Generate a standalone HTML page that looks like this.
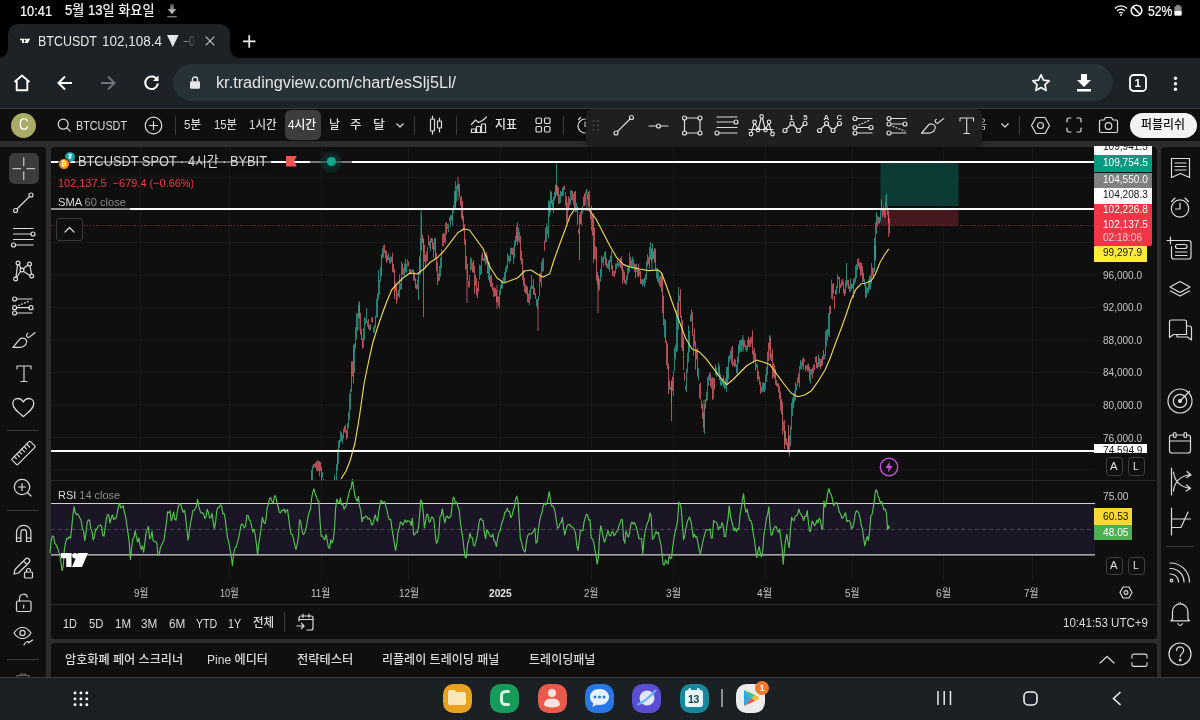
<!DOCTYPE html>
<html lang="ko">
<head>
<meta charset="utf-8">
<title>BTCUSDT 102,108.4</title>
<style>
*{box-sizing:border-box;margin:0;padding:0}
html,body{width:1200px;height:720px;overflow:hidden;background:#000}
body{position:relative;font-family:"Liberation Sans","Noto Sans CJK KR",sans-serif;color:#dbdbdb;-webkit-font-smoothing:antialiased}
.abs{position:absolute}
.t{position:absolute;white-space:nowrap;line-height:1}
svg{position:absolute;overflow:visible}
.ic{fill:none;stroke:#dbdbdb;stroke-width:1.2;stroke-linecap:round;stroke-linejoin:round}
#status{left:0;top:0;width:1200px;height:22px;background:#000}
#tabstrip{left:0;top:22px;width:1200px;height:36px;background:#000}
#tab{left:8px;top:23.500px;width:221.500px;height:34.500px;background:#1c2225;border-radius:10px 10px 0 0}
#toolbar{left:0;top:57.500px;width:1200px;height:50.500px;background:#1c2225}
#url{left:173px;top:64px;width:940px;height:37px;border-radius:19px;background:#273236}
#tvbg{left:0;top:108px;width:1200px;height:569px;background:#2c2c2c;border-top:1px solid #363b3d}
#tvhead{left:0;top:109px;width:1200px;height:32px;background:#0f0f0f}
#ltool{left:0;top:146.500px;width:46.200px;height:530px;background:#0f0f0f;border-radius:0 4px 0 0}
#rtool{left:1160.500px;top:146.500px;width:40px;height:530px;background:#0f0f0f;border-radius:4px 0 0 0}
#chart{left:50.500px;top:146.500px;width:1106px;height:492px;background:#0f0f0f;border-radius:4px}
#bpanel{left:50.500px;top:642.500px;width:1106px;height:34.500px;background:#0f0f0f;border-radius:4px 4px 0 0}
#nav{left:0;top:677px;width:1200px;height:43px;background:#1a2023;border-top:1px solid #353c3f}
#float{left:586px;top:109px;width:395.500px;height:36px;background:#1f1f1f;border-radius:6px;box-shadow:0 2px 4px rgba(0,0,0,.5)}
.sep{position:absolute;width:1px;background:#3a3a3a}
.hsep{position:absolute;height:1px;background:#3a3a3a}
.tv{font-size:13.5px;color:#dbdbdb}
.pl{position:absolute;left:1095px;width:58px;font-size:12px;line-height:1;color:#fff;padding-left:8px;white-space:nowrap}
.ax{position:absolute;left:1103px;font-size:12px;color:#c9c9c9;white-space:nowrap;line-height:1}
.mo{position:absolute;top:586px;font-size:12px;color:#c9c9c9;white-space:nowrap;line-height:1;transform:translateX(-50%)}
.box{position:absolute;width:17px;height:18.500px;border:1px solid #3f3f3f;border-radius:3.500px}
.rg{top:616px;font-size:13.500px;color:#dbdbdb}
.bp{top:653px;font-size:13px;color:#dbdbdb}
.app{top:684px;width:29px;height:29px;border-radius:10.500px}
</style>
</head>
<body>
<div id="root" style="position:absolute;left:0;top:0;width:1200px;height:720px;will-change:transform">
<!-- ===== Android status bar ===== -->
<div id="status" class="abs"></div>
<div class="t" style="transform-origin:0 50%;transform:scaleX(0.9131);left:19.7px;top:4.3px;font-size:14px;color:#fff;-webkit-text-stroke:.2px #f4f4f4">10:41</div>
<div class="t" style="transform-origin:0 50%;transform:scaleX(0.9505);left:64.7px;top:4.1px;font-size:13.8px;color:#fff;-webkit-text-stroke:.2px #f4f4f4">5월 13일 화요일</div>
<svg style="left:167px;top:4px" width="10" height="14" viewBox="0 0 10 14"><defs><linearGradient id="dl" x1="0" y1="0" x2="0" y2="1"><stop offset="0" stop-color="#4a4a4a"/><stop offset="1" stop-color="#e0e0e0"/></linearGradient></defs><path d="M3.300 0h3.400v5H9.500L5 10 .5 5h2.800z" fill="url(#dl)"/><rect x="0.300" y="12" width="9.400" height="1.400" fill="#777"/></svg>
<svg style="left:1114.300px;top:4px" width="14" height="12.500" viewBox="0 0 16 14" preserveAspectRatio="none"><path d="M1 5a10 10 0 0 1 14 0M3.500 7.700a6.500 6.500 0 0 1 9 0M6 10.300a3 3 0 0 1 4 0" fill="none" stroke="#fff" stroke-width="1.500"/><circle cx="8" cy="12.300" r="1" fill="#fff"/></svg>
<svg style="left:1130px;top:4px" width="13" height="13" viewBox="0 0 13 13"><circle cx="6.500" cy="6.500" r="5.300" fill="none" stroke="#fff" stroke-width="1.600"/><path d="M2.800 2.800l7.400 7.400" stroke="#fff" stroke-width="1.600"/></svg>
<div class="t" style="transform-origin:0 50%;transform:scaleX(0.8669);left:1147.5px;top:3.8px;font-size:14px;color:#fff;-webkit-text-stroke:.2px #f4f4f4">52%</div>
<svg style="left:1174px;top:4.500px" width="8" height="11" viewBox="0 0 9 14" preserveAspectRatio="none"><rect x="2.500" y="0" width="4" height="2" fill="#8a8a8a"/><rect x="0.500" y="1.500" width="8" height="12" rx="1.500" fill="#8a8a8a"/><path d="M.5 7.500h8V12a1.500 1.500 0 0 1-1.500 1.500H2A1.500 1.500 0 0 1 .5 12z" fill="#fff"/></svg>

<!-- ===== Browser tab strip ===== -->
<div id="tabstrip" class="abs"></div>
<div id="tab" class="abs"></div>
<svg style="left:0;top:48px" width="8" height="10" viewBox="0 0 8 10"><path d="M0 10h8V0A10 10 0 0 1 0 10z" fill="#1c2225"/></svg>
<svg style="left:229.500px;top:48px" width="8" height="10" viewBox="0 0 8 10"><path d="M8 10H0V0A10 10 0 0 0 8 10z" fill="#1c2225"/></svg>
<svg style="left:20px;top:37.800px" width="11" height="5.700" viewBox="0 0 28 18" preserveAspectRatio="none"><path d="M0 2h10v14H5V7H0zM17 2h9l-6 14h-9z" fill="#fff"/><circle cx="13.500" cy="4.500" r="2.600" fill="#fff"/></svg>
<div class="t" style="transform-origin:0 50%;transform:scaleX(0.8892);left:37.5px;top:33.8px;font-size:14px;color:#e6e6e6">BTCUSDT</div><div class="t" style="transform-origin:0 50%;transform:scaleX(0.9631);left:101.7px;top:33.8px;font-size:14px;color:#e6e6e6">102,108.4</div><div class="t" style="transform-origin:0 50%;transform:scaleX(0.9730);left:166.7px;top:33.25px;font-size:15.5px;color:#e6e6e6;font-family:DejaVu Sans,sans-serif">▼</div><div class="t" style="transform-origin:0 50%;transform:scaleX(0.7327);left:183.3px;top:33.8px;font-size:14px;color:#e6e6e6;-webkit-mask-image:linear-gradient(90deg,rgba(0,0,0,.6),rgba(0,0,0,.15))">−0</div>
<svg style="left:204.500px;top:35.500px" width="10" height="10" viewBox="0 0 10 10"><path d="M.7.700l8.600 8.600M9.300.7L.7 9.300" stroke="#c4c4c4" stroke-width="1.150"/></svg>
<svg style="left:243px;top:35px" width="12.500" height="12.800" viewBox="0 0 13 13"><path d="M6.500 0v13M0 6.500h13" stroke="#f2f2f2" stroke-width="1.800"/></svg>

<!-- ===== Browser toolbar ===== -->
<div id="toolbar" class="abs"></div>
<svg style="left:13px;top:74px" width="18" height="18" viewBox="0 0 18 18"><path d="M1.500 8L9 1.500 16.500 8M3.700 6.500v9.700h10.600V6.500" fill="none" stroke="#fff" stroke-width="1.900" stroke-linejoin="round"/></svg>
<svg style="left:57px;top:75px" width="16" height="16" viewBox="0 0 16 16"><path d="M15 8H2M8 1.500L1.500 8 8 14.500" fill="none" stroke="#fff" stroke-width="2"/></svg>
<svg style="left:100px;top:75px" width="16" height="16" viewBox="0 0 16 16"><path d="M1 8h13M8 1.500L14.500 8 8 14.500" fill="none" stroke="#6b7478" stroke-width="2"/></svg>
<svg style="left:143px;top:74px" width="17" height="17" viewBox="0 0 17 17"><path d="M14.300 6.200A6.300 6.300 0 1 0 14.800 9.500" fill="none" stroke="#fff" stroke-width="2"/><path d="M15.500 1.500v5.500h-5.500z" fill="#fff"/></svg>
<div id="url" class="abs"></div>
<svg style="left:189.500px;top:76px" width="10" height="13" viewBox="0 0 11 14"><rect x="0" y="5.500" width="11" height="8.500" rx="1.200" fill="#e6e6e6"/><path d="M2.700 6V3.800a2.800 2.800 0 0 1 5.600 0V6" fill="none" stroke="#e6e6e6" stroke-width="1.500"/></svg>
<div class="t" style="transform-origin:0 50%;transform:scaleX(1.0150);left:216.4px;top:74.5px;font-size:16px;color:#e3e3e3">kr.tradingview.com/chart/esSlj5Ll/</div>
<svg style="left:1031px;top:73px" width="20" height="19" viewBox="0 0 20 19"><path d="M10 1.800l2.500 5.300 5.700.7-4.200 3.900 1.100 5.700L10 14.600l-5.100 2.800 1.100-5.700L1.800 7.800l5.700-.7z" fill="none" stroke="#fff" stroke-width="1.700" stroke-linejoin="round"/></svg>
<svg style="left:1076px;top:74px" width="16" height="18" viewBox="0 0 16 18"><path d="M5 0h6v6h4l-7 7-7-7h4z" fill="#fff"/><rect x="1" y="15" width="14" height="2.500" fill="#fff"/></svg>
<svg style="left:1129px;top:74px" width="18" height="18" viewBox="0 0 18 18"><rect x="1" y="1" width="16" height="16" rx="3.500" fill="none" stroke="#fff" stroke-width="1.800"/></svg>
<div class="t" style="left:1134.500px;top:77.500px;font-size:11.500px;color:#fff;font-weight:bold">1</div>
<svg style="left:1173px;top:76px" width="5" height="16" viewBox="0 0 5 16"><circle cx="2.500" cy="2.200" r="1.700" fill="#fff"/><circle cx="2.500" cy="7.700" r="1.700" fill="#fff"/><circle cx="2.500" cy="13.200" r="1.700" fill="#fff"/></svg>
<!-- ===== TradingView app ===== -->
<div id="tvbg" class="abs"></div>
<div id="tvhead" class="abs"></div>
<div class="abs" style="left:10.800px;top:112.800px;width:25px;height:25px;border-radius:50%;background:#a9ab66"></div>
<div class="t" style="transform-origin:0 50%;transform:scaleX(0.7918);left:18.7px;top:117px;font-size:16.8px;color:#fff">C</div>
<svg style="left:57px;top:118px" width="14" height="14" viewBox="0 0 14 14"><circle cx="6.200" cy="6.200" r="5" class="ic" stroke-width="1.300"/><path d="M9.900 9.900l3.300 3.300" class="ic" stroke-width="1.300"/></svg>
<div class="t" style="transform-origin:0 50%;transform:scaleX(0.8307);left:76px;top:118.8px;font-size:13px;color:#dbdbdb">BTCUSDT</div>
<svg style="left:144px;top:116px" width="19" height="19" viewBox="0 0 19 19"><circle cx="9.500" cy="9.500" r="8.300" class="ic"/><path d="M9.500 5.500v8M5.500 9.500h8" class="ic"/></svg>
<div class="sep" style="left:175px;top:116px;height:19px"></div>
<div class="t" style="transform-origin:0 50%;transform:scaleX(0.9213);left:184.4px;top:119.25px;font-size:12.5px;color:#dbdbdb;font-weight:500">5분</div>
<div class="t" style="transform-origin:0 50%;transform:scaleX(0.9053);left:214px;top:119.25px;font-size:12.5px;color:#dbdbdb;font-weight:500">15분</div>
<div class="t" style="transform-origin:0 50%;transform:scaleX(0.9214);left:249.4px;top:119.25px;font-size:12.5px;color:#dbdbdb;font-weight:500">1시간</div>
<div class="abs" style="left:285px;top:110px;width:36px;height:30px;border-radius:6px;background:#3d3d3d"></div>
<div class="t" style="transform-origin:0 50%;transform:scaleX(0.9415);left:288.4px;top:119.25px;font-size:12.5px;color:#fff;font-weight:500">4시간</div>
<div class="t" style="transform-origin:0 50%;transform:scaleX(0.9552);left:328.5px;top:119.25px;font-size:12.5px;color:#dbdbdb;font-weight:500">날</div>
<div class="t" style="transform-origin:0 50%;transform:scaleX(0.9986);left:350px;top:119.25px;font-size:12.5px;color:#dbdbdb;font-weight:500">주</div>
<div class="t" style="transform-origin:0 50%;transform:scaleX(1.0421);left:372.5px;top:119.25px;font-size:12.5px;color:#dbdbdb;font-weight:500">달</div>
<svg style="left:396px;top:123px" width="8" height="5" viewBox="0 0 8 5"><path d="M.7.800L4 4 7.300.8" class="ic" stroke-width="1.200"/></svg>
<div class="sep" style="left:414px;top:116px;height:19px"></div>
<svg style="left:429px;top:115px" width="14" height="20" viewBox="0 0 14 20"><path d="M3.500 1v3M3.500 16v3M10.500 3v3M10.500 13v4" class="ic"/><rect x="1.500" y="4" width="4" height="12" rx=".5" class="ic"/><rect x="8.500" y="6" width="4" height="7" rx=".5" class="ic"/></svg>
<div class="sep" style="left:456px;top:116px;height:19px"></div>
<svg style="left:470px;top:116px" width="18" height="18" viewBox="0 0 18 18"><path d="M1.500 8.500l4-4.500 3 2.500 4-2 4-3.500" class="ic" stroke-width="1.300"/><path d="M1.500 16.500v-3.500h4v3.500M6.500 16.500v-6h4v6M11.500 16.500v-8.500h4v8.500M1 16.500h15" class="ic" stroke-width="1.300"/></svg>
<div class="t" style="transform-origin:0 50%;transform:scaleX(0.9559);left:494.5px;top:119.25px;font-size:12.5px;color:#e6e6e6;font-weight:500">지표</div>
<svg style="left:535px;top:117px" width="16" height="16" viewBox="0 0 16 16"><rect x="1" y="1" width="5.500" height="5.500" rx="1.200" class="ic" stroke-width="1.300"/><rect x="9.500" y="1" width="5.500" height="5.500" rx="1.200" class="ic" stroke-width="1.300"/><rect x="1" y="9.500" width="5.500" height="5.500" rx="1.200" class="ic" stroke-width="1.300"/><rect x="9.500" y="9.500" width="5.500" height="5.500" rx="1.200" class="ic" stroke-width="1.300"/></svg>
<div class="sep" style="left:563px;top:116px;height:19px"></div>
<svg style="left:575px;top:116px" width="18" height="18" viewBox="0 0 18 18"><circle cx="10" cy="10" r="7" class="ic" stroke-width="1.300"/><path d="M10 6v4.500h4M3.500 3.500l2-2" class="ic" stroke-width="1.300"/></svg>
<!-- right side of header (partly behind floating toolbar) -->
<div class="t" style="transform-origin:0 50%;transform:scaleX(1.0421);left:975px;top:119.25px;font-size:12.5px;color:#bbb">음</div>
<svg style="left:1000.500px;top:123px" width="8" height="5" viewBox="0 0 8 5"><path d="M.7.800L4 4 7.300.8" class="ic" stroke-width="1.200"/></svg>
<div class="sep" style="left:1019px;top:116px;height:19px"></div>
<svg style="left:1030px;top:115px" width="21" height="21" viewBox="0 0 21 21"><path d="M6 2.500h9l4.500 8-4.500 8H6l-4.500-8z" class="ic" stroke-width="1.400"/><circle cx="10.500" cy="10.500" r="3" class="ic" stroke-width="1.400"/></svg>
<svg style="left:1066px;top:117px" width="16" height="16" viewBox="0 0 16 16"><path d="M1 5V2.500A1.500 1.500 0 0 1 2.500 1H5M11 1h2.500A1.500 1.500 0 0 1 15 2.500V5M15 11v2.500a1.500 1.500 0 0 1-1.500 1.500H11M5 15H2.500A1.500 1.500 0 0 1 1 13.500V11" class="ic" stroke-width="1.400"/></svg>
<svg style="left:1098px;top:116px" width="21" height="18" viewBox="0 0 21 18"><path d="M1.500 5.500a1.500 1.500 0 0 1 1.500-1.500h3l1.500-2.500h6L15 4h3a1.500 1.500 0 0 1 1.500 1.500v9.500a1.500 1.500 0 0 1-1.500 1.500H3a1.500 1.500 0 0 1-1.500-1.500z" class="ic" stroke-width="1.400"/><circle cx="10.500" cy="10" r="3.300" class="ic" stroke-width="1.400"/></svg>
<div class="abs" style="left:1129.500px;top:112.500px;width:67px;height:25.500px;border-radius:13px;background:#f2f2f2"></div>
<div class="t" style="transform-origin:0 50%;transform:scaleX(0.9562);left:1141px;top:119.05px;font-size:12.5px;color:#111;font-weight:500">퍼블리쉬</div>
<!-- ===== left drawing toolbar ===== -->
<div id="ltool" class="abs"></div>
<div class="abs" style="left:8.500px;top:153px;width:30.500px;height:30.500px;border-radius:6px;background:#3c3c3c"></div>
<svg style="left:0;top:147px" width="46" height="530" viewBox="0 147 46 530">
<g class="ic" stroke-width="1.150">
<path d="M23.700 158v7.500M23.700 172v7.500M13 168.700h7.500M27 168.700h7.500" stroke="#bdbdbd" stroke-width="1.300"/>
<path d="M17 209l12.500-12.500"/><circle cx="15.600" cy="210.500" r="2"/><circle cx="31" cy="195" r="2"/>
<path d="M13.500 228.500h19.500M13.500 234h17.500M13.500 239.500h19.500M15.500 245h17.500"/><circle cx="33" cy="234" r="2"/><circle cx="13.500" cy="245" r="2"/>
<path d="M17.500 265l-1.500 12M19 264.500l2 4M23.500 268.500l4.500-3.500M30 266l1.500 8M23.500 271.500l6.500 4M20.500 271.500l-4 6"/><circle cx="18" cy="263" r="1.900"/><circle cx="29.500" cy="264" r="1.900"/><circle cx="22" cy="270" r="1.900"/><circle cx="31.700" cy="276" r="1.900"/><circle cx="15.600" cy="279" r="1.900"/>
<path d="M16.500 299h15.500M16.500 307.700h12.500M16.500 313h15.500"/><path d="M18.500 305.500l11-4.500" stroke-dasharray="1 2.200"/><circle cx="14.600" cy="299" r="2"/><circle cx="14.600" cy="307.700" r="2"/><circle cx="31" cy="307.700" r="2"/><circle cx="14.600" cy="313" r="2"/>
<path d="M12.900 347.300L19.900 339.100C21.400 337.600 24.900 337.600 26.400 340.100C27.900 343.100 24.400 347.300 20.400 347.300ZM27.700 333.400C25.900 334.600 26.200 337.100 28.700 337.600L35 332.700"/>
<path d="M17 369v-3h14v3M24 366v15.500M21 381.500h6" stroke-width="1.100"/>
<path d="M23.300 416.500c-5-4-10.500-8-10.500-13 0-3 2.300-5 5-5 2.300 0 4.200 1.300 5.500 3.500 1.300-2.200 3.200-3.500 5.500-3.500 2.700 0 5 2 5 5 0 5-5.500 9-10.500 13z" stroke-width="1.300"/>
<g transform="translate(23.500 453) rotate(-45)"><rect x="-13" y="-4" width="26" height="8" rx="1"/><path d="M-9 -4v3M-5.500 -4v4M-2 -4v3M1.500 -4v4M5 -4v3M8.500 -4v4"/></g>
<circle cx="22" cy="487" r="7.700"/><path d="M27.500 492.500l3.500 3.500M22 483.500v7M18.500 487h7"/>
<path d="M16.500 541.500v-9a7.200 7.200 0 0 1 14.400 0v9h-4.400v-9a2.800 2.800 0 0 0-5.600 0v9zM16.500 538h4.400M26.500 538h4.400"/>
<path d="M14 574l1-4.500 10.500-10.500a2 2 0 0 1 3.500 3.500l-10.500 10.500zM23.500 561l3.500 3.500"/><rect x="24.500" y="572" width="8" height="6" rx="1" fill="#0f0f0f"/><path d="M26.500 572v-1.500a2 2 0 0 1 4 0"/>
<rect x="16.500" y="601" width="14.500" height="10.500" rx="1.500"/><path d="M19.500 601v-3a4 4 0 0 1 7.800-1M23.700 605v3"/>
<path d="M14 633c2.500-4 5.500-5.500 8.500-5.500s6 1.500 8.500 5.500c-2.500 4-5.500 5.500-8.500 5.500s-6-1.500-8.500-5.500z"/><circle cx="22.500" cy="633" r="2.600"/><path d="M24 645c1-2.500 2.500-3.500 4.500-3.500M28.500 643l4-3"/>
<path d="M17 677v-1.500h12v1.500M20.500 675.500v-1.500h5v1.500" stroke="#666"/>
</g>
<path d="M7 430.500h32M7 510.500h32M7 659.500h32" stroke="#3a3a3a" stroke-width="1"/>
</svg>
<!-- ===== right widget bar ===== -->
<div id="rtool" class="abs"></div>
<svg style="left:1160px;top:147px" width="40" height="530" viewBox="1160 147 40 530">
<g class="ic" stroke-width="1.200">
<path d="M1171.500 158.500h18v19l-9-4-9 4zM1175 163h11M1175 166.500h11M1175 170h11"/>
<circle cx="1180" cy="208.500" r="8.700"/><path d="M1180 203v6h-4.500M1171.500 201.500l3.500-3.500M1188.500 201.500l-3.500-3.500"/>
<path d="M1174 240.500h14.500a2.500 2.500 0 0 1 2.500 2.500v13.500a2.500 2.500 0 0 1-2.500 2.500h-14.500a2.500 2.500 0 0 1-2.500-2.500v-10M1167 240.500h7M1170.500 237v7"/><rect x="1175.500" y="244.500" width="11.500" height="4" rx="2"/><path d="M1175.500 252h11.500M1175.500 255.500h11.500"/>
<path d="M1180 281.500l10 5.500-10 5.500-10-5.500zM1170.500 291l9.500 5 9.500-5"/>
<path d="M1169.500 322a2 2 0 0 1 2-2h13a2 2 0 0 1 2 2v12.500h-13l-4 3zM1186.500 326h3a2 2 0 0 1 2 2v12l-4-3h-10.500v-2.500"/>
<circle cx="1180" cy="401" r="12"/><circle cx="1180" cy="401" r="6.700"/><circle cx="1180" cy="401" r="1.500" fill="#dbdbdb"/><path d="M1181 400l8.500-8.500"/>
<rect x="1169.500" y="435" width="21" height="18" rx="2.500"/><path d="M1169.500 441h21"/><rect x="1173.500" y="432.500" width="2.600" height="5" rx="1.300" fill="#0f0f0f"/><rect x="1184" y="432.500" width="2.600" height="5" rx="1.300" fill="#0f0f0f"/>
<path d="M1171.500 468v27M1173.500 472c1 9 7 15 17 16.500M1173.500 491c1-9 7-15 17-16.500M1187 471.500l4 3.500-4.500 2.500M1186.500 485l4 3.500-4.500 2.500"/>
<path d="M1171.500 508v27M1171.500 519h19M1171.500 527.500h9.500l7-15.500"/>
<path d="M1170 563a19 19 0 0 1 19.500 19M1170 568.500a13.500 13.500 0 0 1 14 13.500M1170 574a8 8 0 0 1 8.500 8"/><circle cx="1171.500" cy="580.500" r="1.300"/>
<path d="M1172.500 619v-7.500a7.700 7.700 0 0 1 15.400 0V619l1.600 1.800h-18.600zM1178 623.500a2.300 2.300 0 0 0 4.500 0M1180.200 603.500v-1"/>
<circle cx="1180" cy="654" r="11"/><path d="M1176.500 650.500a3.600 3.600 0 1 1 5.500 3c-1.300.9-1.800 1.700-1.800 3.300"/><circle cx="1180.200" cy="660" r=".9"/>
</g>
<path d="M1166 546.500h28" stroke="#3a3a3a"/>
</svg>
<!-- ===== chart panel ===== -->
<div id="chart" class="abs"></div>
<svg style="left:51px;top:147px" width="1044" height="433" viewBox="51 147 1044 433">
<defs><clipPath id="pp"><rect x="51" y="147" width="1044" height="333"/></clipPath></defs>
<path d="M140.5 147V580M229.5 147V580M321.5 147V580M408.5 147V580M500.5 147V580M591.5 147V580M673.5 147V580M765.5 147V580M852.5 147V580M943.5 147V580M1032.5 147V580M51 177.5H1095M51 210.0H1095M51 242.5H1095M51 275.0H1095M51 307.5H1095M51 340.0H1095M51 372.5H1095M51 405.0H1095M51 437.5H1095M51 470.0H1095M51 516H1095M51 541.500H1095" stroke="#181818" stroke-width="1" fill="none"/>
<rect x="51" y="503.500" width="1044" height="51" fill="#1a1626"/>
<path d="M51 529.500H1095" stroke="#4a4458" stroke-width="1" stroke-dasharray="4 3"/>
<path d="M51 503.500H1095M51 554.800H1095" stroke="#cfcfcf" stroke-width="1.200"/>
<g clip-path="url(#pp)">
<rect x="880.500" y="163" width="78" height="43" fill="#0c3b35"/>
<rect x="880.500" y="209" width="78" height="16.700" fill="#451a1e"/>
<path d="M312.5 465.6V480.6M313.5 463.7V468.5M317.5 459.9V471.5M322.5 472.1V478.2M326.5 486.4V494.7M327.5 483.3V491.7M328.5 480.5V494.8M329.5 488.7V495.4M331.5 490.1V496.5M332.5 485.7V494.7M334.5 474.3V495.6M336.5 463.8V483.0M338.5 440.9V463.7M340.5 431.0V442.1M342.5 434.7V443.8M343.5 428.8V438.8M345.5 424.7V432.9M348.5 411.9V427.9M349.5 393.8V420.1M350.5 389.3V410.1M354.5 343.4V372.9M355.5 327.2V349.1M356.5 313.0V339.1M357.5 313.5V331.2M358.5 305.5V317.8M363.5 328.1V347.3M364.5 317.2V340.2M365.5 318.4V324.7M366.5 307.9V322.7M367.5 320.7V326.5M370.5 324.0V329.9M371.5 317.6V321.9M374.5 324.8V332.6M375.5 315.7V327.8M376.5 298.7V317.7M377.5 293.4V317.4M378.5 270.1V299.6M379.5 279.8V294.9M380.5 267.0V281.9M382.5 248.2V258.8M383.5 245.2V257.2M388.5 252.8V259.9M390.5 256.4V263.7M391.5 256.7V262.1M397.5 292.6V300.1M398.5 289.7V296.5M399.5 274.4V297.9M400.5 283.3V289.3M401.5 261.7V289.9M403.5 267.8V275.0M404.5 263.2V276.7M406.5 264.4V272.9M407.5 259.3V266.4M409.5 268.8V274.1M411.5 269.9V274.4M412.5 269.3V272.3M417.5 279.4V289.9M418.5 272.6V300.0M420.5 237.8V274.6M421.5 214.2V250.5M427.5 247.3V261.1M430.5 238.4V251.3M434.5 237.8V250.6M439.5 265.9V280.5M440.5 257.7V276.6M441.5 249.4V268.1M443.5 233.3V246.2M445.5 222.9V243.8M447.5 224.0V229.1M448.5 223.6V232.2M449.5 216.9V221.5M450.5 215.2V227.3M452.5 208.7V225.5M453.5 204.8V213.3M454.5 190.8V207.8M456.5 186.1V201.8M457.5 184.7V189.3M458.5 183.9V191.6M469.5 274.7V287.5M470.5 257.2V270.9M471.5 258.2V269.3M479.5 264.6V279.6M480.5 265.6V275.3M481.5 255.0V274.0M484.5 252.4V261.7M485.5 253.9V265.3M488.5 261.4V279.7M493.5 287.0V296.9M499.5 289.5V308.7M500.5 285.0V295.0M502.5 280.6V289.1M504.5 272.1V282.0M505.5 266.8V282.4M506.5 265.0V272.3M507.5 253.3V268.7M508.5 254.9V261.3M510.5 248.1V261.2M513.5 246.8V263.8M514.5 240.5V258.3M515.5 235.8V246.0M517.5 231.3V241.7M518.5 227.4V241.1M519.5 231.9V243.1M529.5 290.1V305.4M530.5 286.6V299.2M532.5 285.5V289.0M536.5 298.8V306.5M537.5 299.0V309.3M538.5 296.2V300.6M539.5 273.8V296.1M541.5 261.7V287.2M542.5 259.1V271.8M543.5 257.7V271.1M545.5 227.6V242.0M546.5 223.5V242.0M547.5 226.1V233.9M548.5 200.4V238.1M550.5 190.5V212.3M552.5 199.7V207.7M554.5 191.8V200.5M559.5 194.5V203.8M560.5 190.9V202.8M562.5 187.8V196.4M563.5 186.1V195.7M565.5 192.0V205.9M567.5 202.2V221.1M569.5 198.3V206.4M570.5 190.1V204.4M571.5 190.4V200.2M573.5 193.7V205.2M576.5 202.8V211.7M579.5 218.3V225.9M581.5 207.6V225.3M582.5 205.8V213.9M585.5 191.7V205.0M586.5 188.7V194.2M589.5 190.3V208.5M595.5 245.8V259.7M599.5 279.1V289.7M600.5 268.8V281.7M601.5 255.5V277.0M602.5 257.5V262.9M603.5 256.3V266.6M604.5 252.2V258.5M607.5 263.6V268.3M608.5 260.7V269.0M610.5 255.7V262.1M613.5 270.7V275.8M615.5 263.3V273.7M616.5 263.5V269.3M617.5 259.0V265.8M618.5 262.2V267.5M619.5 261.8V266.1M623.5 269.4V280.6M625.5 279.7V284.3M626.5 275.4V284.6M627.5 267.7V280.4M628.5 265.6V274.3M629.5 252.4V271.9M632.5 256.5V268.6M633.5 258.9V268.1M636.5 263.8V272.2M637.5 267.1V276.5M641.5 279.3V283.8M642.5 278.9V286.2M644.5 277.4V287.2M645.5 274.0V283.3M646.5 261.3V279.4M647.5 254.2V266.3M649.5 246.9V268.9M650.5 242.0V259.8M652.5 243.6V260.0M656.5 268.3V278.5M658.5 272.4V283.4M659.5 276.9V286.1M664.5 318.6V337.5M670.5 387.0V390.0M673.5 370.8V395.7M674.5 347.6V371.2M675.5 344.8V359.5M676.5 309.9V351.8M677.5 301.9V351.4M679.5 295.4V301.3M681.5 315.6V348.0M685.5 385.6V389.8M686.5 368.8V392.0M687.5 352.7V372.7M688.5 325.4V362.5M689.5 330.5V352.0M690.5 314.6V321.5M693.5 334.9V355.7M698.5 367.9V380.6M699.5 383.8V398.4M704.5 403.9V434.0M706.5 392.2V401.6M707.5 377.0V400.2M708.5 375.4V386.0M709.5 372.2V380.9M711.5 377.7V388.8M713.5 377.4V398.5M716.5 367.5V376.9M717.5 372.2V375.9M718.5 362.6V376.9M720.5 373.7V385.4M722.5 379.1V384.4M724.5 382.7V388.9M725.5 377.8V388.3M726.5 366.6V392.1M728.5 356.3V379.6M729.5 354.8V362.2M730.5 350.4V359.2M731.5 347.5V363.5M733.5 362.0V365.4M735.5 359.7V366.5M736.5 364.2V373.1M737.5 356.4V375.6M738.5 344.7V363.0M740.5 340.1V351.6M742.5 337.4V345.5M743.5 339.5V349.5M745.5 344.6V349.8M746.5 345.9V352.0M747.5 339.9V350.2M749.5 339.3V347.1M751.5 336.7V343.5M753.5 350.2V363.1M756.5 363.5V367.3M761.5 387.0V391.7M762.5 383.0V392.6M764.5 383.2V392.1M765.5 374.3V389.6M766.5 366.8V381.9M767.5 351.7V375.2M769.5 336.0V349.1M773.5 363.0V377.0M783.5 421.2V431.3M784.5 431.0V440.7M787.5 442.0V450.9M789.5 434.9V456.3M790.5 426.4V446.1M791.5 402.5V429.8M792.5 398.2V415.9M794.5 391.0V402.2M795.5 382.1V400.4M796.5 384.4V390.8M797.5 377.6V385.7M799.5 365.9V387.5M800.5 359.8V369.4M801.5 362.1V369.4M803.5 357.0V369.8M807.5 364.2V371.7M810.5 369.0V383.5M811.5 369.1V374.8M813.5 364.2V372.9M818.5 354.4V367.1M819.5 358.1V367.0M824.5 354.3V359.3M825.5 330.9V355.9M826.5 329.8V346.5M827.5 328.7V340.8M828.5 313.0V335.3M829.5 306.4V337.1M831.5 279.7V298.7M836.5 285.7V294.8M837.5 274.1V288.3M841.5 280.3V286.3M845.5 280.4V294.2M846.5 263.0V287.7M847.5 279.8V285.2M850.5 278.5V291.6M852.5 284.1V288.0M854.5 277.6V285.1M855.5 265.7V282.3M856.5 264.2V278.4M857.5 258.9V270.4M864.5 279.1V286.4M866.5 286.7V297.1M867.5 287.6V293.6M868.5 279.7V293.0M870.5 274.4V289.7M871.5 263.2V283.8M873.5 268.2V278.8M874.5 237.8V258.4M877.5 215.4V226.2M880.5 210.6V221.5M883.5 205.7V215.0M885.5 202.5V217.5M886.5 193.5V206.4M421.0 209.0V250.0M359.0 301.0V330.0M455.5 181.0V205.0M517.5 222.0V245.0M556.5 163.5V195.0M587.0 190.0V210.0M652.0 248.0V270.0M678.5 287.0V330.0M743.0 335.0V352.0M770.0 335.0V360.0M886.0 195.0V210.0M874.5 245.0V272.0M875.5 222.0V258.0M876.5 212.0V234.0" stroke="#2aa391" stroke-width="1" fill="none" opacity=".78"/>
<path d="M311.5 469.7V487.6M314.5 464.1V466.8M315.5 462.6V468.1M316.5 461.1V470.7M318.5 461.3V471.0M319.5 461.0V476.3M320.5 462.0V471.0M321.5 466.9V482.5M323.5 478.9V487.4M324.5 480.0V487.5M325.5 483.8V497.5M330.5 488.7V496.0M333.5 487.2V495.8M335.5 480.1V487.1M337.5 448.9V470.4M339.5 439.9V447.8M341.5 432.3V441.0M344.5 425.9V432.4M346.5 430.2V439.5M347.5 423.1V437.9M351.5 361.6V391.7M352.5 361.4V376.3M353.5 344.8V383.4M359.5 302.5V318.7M360.5 312.7V334.7M361.5 328.9V339.9M362.5 338.1V348.7M368.5 319.1V329.0M369.5 324.9V330.9M372.5 317.2V322.7M373.5 327.3V332.7M381.5 254.1V276.5M384.5 244.5V253.3M385.5 250.2V258.4M386.5 250.9V263.0M387.5 255.4V260.8M389.5 257.9V263.1M392.5 252.7V271.9M393.5 264.0V272.7M394.5 269.1V299.0M395.5 282.4V291.6M396.5 284.2V303.7M402.5 263.7V274.8M405.5 259.3V271.8M408.5 261.4V266.1M410.5 269.2V274.2M413.5 269.5V280.3M414.5 272.1V281.1M415.5 278.2V288.3M416.5 284.4V289.0M419.5 256.2V275.2M422.5 234.5V243.2M423.5 238.1V251.9M424.5 244.7V261.8M425.5 254.7V268.4M426.5 251.7V261.5M428.5 234.9V245.7M429.5 241.2V247.6M431.5 237.9V242.6M432.5 238.5V249.2M433.5 242.6V257.7M435.5 238.5V259.8M436.5 252.8V271.2M437.5 262.3V285.2M438.5 273.7V281.1M442.5 233.9V246.3M444.5 233.3V242.6M446.5 222.0V234.3M451.5 215.2V220.2M455.5 192.3V209.5M459.5 183.7V196.9M460.5 196.9V205.6M461.5 195.7V218.6M462.5 201.1V220.9M463.5 215.7V230.8M464.5 224.3V244.7M465.5 239.1V269.5M466.5 255.9V269.9M467.5 264.1V279.9M468.5 280.9V287.0M472.5 262.4V272.5M473.5 259.9V272.4M474.5 265.9V293.5M475.5 274.9V285.7M476.5 278.2V295.3M477.5 287.7V298.4M478.5 281.0V291.7M482.5 252.5V260.3M483.5 258.3V261.2M486.5 251.9V263.6M487.5 255.4V273.8M489.5 262.7V282.5M490.5 275.8V286.5M491.5 274.5V287.1M492.5 282.5V290.9M494.5 287.4V296.6M495.5 288.3V296.3M496.5 290.0V302.4M497.5 296.7V301.7M498.5 296.3V305.7M501.5 280.6V288.5M503.5 277.1V281.3M509.5 256.2V263.5M511.5 247.6V254.5M512.5 248.1V255.0M516.5 226.5V241.6M520.5 235.8V260.5M521.5 250.3V264.5M522.5 258.3V279.8M523.5 269.8V285.6M524.5 278.1V292.0M525.5 284.6V293.3M526.5 285.4V294.6M527.5 286.6V302.1M528.5 293.8V302.9M531.5 275.0V288.8M533.5 279.4V294.7M534.5 288.0V295.0M535.5 293.0V299.0M540.5 272.9V282.5M544.5 240.6V250.8M549.5 201.3V216.8M551.5 191.8V204.0M553.5 197.2V213.0M555.5 184.9V198.0M556.5 184.4V193.9M557.5 185.7V196.0M558.5 187.1V203.8M561.5 192.0V196.4M564.5 185.8V190.0M566.5 196.2V222.8M568.5 196.2V210.8M572.5 190.8V200.6M574.5 191.9V210.3M575.5 190.9V212.3M577.5 206.3V224.8M578.5 229.4V233.6M580.5 211.6V223.9M583.5 196.7V206.1M584.5 193.7V206.3M587.5 194.3V199.4M588.5 192.0V206.4M590.5 208.0V219.3M591.5 205.6V230.6M592.5 215.2V235.7M593.5 213.5V263.1M594.5 227.7V259.1M596.5 247.2V280.8M597.5 272.1V284.7M598.5 276.2V291.2M605.5 251.2V265.0M606.5 258.0V267.2M609.5 259.8V271.6M611.5 251.1V269.5M612.5 265.1V276.2M614.5 270.9V277.5M620.5 258.0V267.8M621.5 256.1V270.3M622.5 262.0V284.1M624.5 271.6V283.2M630.5 256.8V266.6M631.5 260.2V268.4M634.5 263.4V271.7M635.5 264.2V277.9M638.5 263.8V277.3M639.5 269.6V275.4M640.5 270.9V283.9M643.5 279.3V285.1M648.5 256.9V264.3M651.5 248.9V261.7M653.5 250.8V259.0M654.5 248.1V262.6M655.5 248.7V270.7M657.5 267.7V281.5M660.5 276.1V287.5M661.5 273.9V291.6M662.5 274.0V313.3M663.5 295.7V325.7M665.5 320.3V343.1M666.5 340.4V365.3M667.5 343.7V369.2M668.5 363.4V394.2M669.5 380.7V389.6M671.5 382.6V403.2M672.5 376.6V391.2M678.5 303.6V316.2M680.5 289.1V317.8M682.5 320.3V351.0M683.5 337.2V370.0M684.5 372.4V380.6M691.5 309.5V321.5M692.5 312.5V335.9M694.5 328.6V346.1M695.5 341.0V369.8M696.5 348.8V359.5M697.5 347.8V376.6M700.5 382.4V399.6M701.5 400.5V408.5M702.5 403.8V418.6M703.5 412.4V427.6M705.5 399.1V408.5M710.5 373.3V386.5M712.5 377.4V400.1M714.5 378.3V389.8M715.5 364.7V375.0M719.5 365.8V380.3M721.5 379.6V385.6M723.5 375.4V386.6M727.5 367.0V384.3M732.5 345.9V366.0M734.5 358.8V367.2M739.5 340.3V353.3M741.5 339.6V351.6M744.5 340.1V346.9M748.5 336.5V346.7M750.5 337.6V347.2M752.5 330.5V354.5M754.5 347.7V359.7M755.5 353.2V370.7M757.5 364.2V380.7M758.5 371.0V379.1M759.5 376.7V384.6M760.5 381.6V393.9M763.5 382.2V391.5M768.5 342.8V361.2M770.5 337.6V358.5M771.5 353.6V361.0M772.5 349.0V378.8M774.5 364.7V378.5M775.5 368.8V384.7M776.5 379.9V386.1M777.5 383.2V386.8M778.5 383.2V392.4M779.5 386.0V398.9M780.5 391.4V410.5M781.5 398.6V414.5M782.5 401.9V434.8M785.5 431.0V444.5M786.5 438.3V445.6M788.5 436.2V453.1M793.5 395.1V408.0M798.5 373.5V382.9M802.5 358.4V366.4M804.5 359.3V361.6M805.5 365.1V371.4M806.5 365.8V369.2M808.5 363.6V371.5M809.5 367.0V380.8M812.5 367.4V378.2M814.5 364.6V370.0M815.5 356.6V362.5M816.5 356.1V368.1M817.5 362.1V368.8M820.5 359.2V369.2M821.5 358.7V366.4M822.5 355.9V365.5M823.5 349.8V359.6M830.5 305.5V314.1M832.5 284.0V299.7M833.5 283.0V293.9M834.5 296.0V309.1M835.5 289.9V294.7M838.5 276.6V279.2M839.5 277.1V293.4M840.5 283.7V288.2M842.5 279.1V285.3M843.5 281.9V293.4M844.5 289.0V296.1M848.5 279.8V288.8M849.5 285.5V291.7M851.5 283.6V289.5M853.5 279.1V298.1M858.5 258.2V266.6M859.5 262.7V269.3M860.5 262.2V275.9M861.5 262.8V275.2M862.5 266.1V282.4M863.5 272.7V281.6M865.5 283.8V298.2M869.5 276.2V289.3M872.5 267.3V276.3M875.5 245.3V261.0M876.5 223.4V228.2M878.5 216.6V224.3M879.5 217.4V223.5M881.5 199.4V211.3M882.5 208.0V217.1M884.5 207.8V217.8M887.5 206.1V215.1M888.5 211.0V222.8M889.5 218.5V233.4M423.5 240.0V317.0M458.0 177.0V200.0M467.0 270.0V303.0M497.0 285.0V309.0M538.0 300.0V331.0M579.5 215.0V260.0M598.0 275.0V313.0M671.5 380.0V421.0M704.0 400.0V432.0M784.5 420.0V449.0M788.5 425.0V451.0M888.7 215.0V237.0" stroke="#e2626b" stroke-width="1" fill="none" opacity=".78"/>
<path d="M51 225.500H1095" stroke="#842a32" stroke-width="1" stroke-dasharray="1 2"/>
<path d="M341.0 479.0L346.0 471.0L350.0 461.0L355.0 443.0L359.5 416.0L364.0 384.0L368.7 361.0L373.0 342.0L378.0 326.0L382.5 313.0L387.0 301.0L391.6 290.0L396.0 285.0L403.0 278.0L410.0 273.0L417.0 274.0L423.7 269.0L430.5 262.0L437.4 257.6L444.0 251.0L451.0 241.6L458.0 232.5L464.0 229.0L469.5 230.0L476.0 239.0L483.0 248.5L490.0 267.0L497.0 278.0L504.0 283.0L510.7 280.5L517.6 278.0L524.5 271.0L531.0 270.0L538.0 274.6L543.0 277.0L549.7 273.7L554.0 260.0L559.0 246.0L565.7 228.0L570.0 216.0L575.0 208.6L581.7 209.5L589.0 210.0L596.0 219.0L603.0 232.5L610.0 246.0L616.7 257.7L623.6 264.6L630.0 267.0L639.6 269.0L648.8 270.6L658.0 270.0L661.6 273.0L667.0 287.5L671.7 301.0L678.6 319.6L685.5 338.0L692.0 349.0L699.0 351.7L706.0 358.6L713.0 367.8L720.0 377.0L726.7 384.7L733.6 379.0L740.5 372.0L747.0 365.5L756.5 360.0L763.0 362.0L770.0 364.6L777.0 374.7L784.0 384.0L791.0 393.0L797.8 396.7L804.7 395.0L811.5 390.7L818.0 381.5L825.0 370.0L830.0 358.6L836.7 340.0L841.0 329.0L846.0 315.0L851.0 300.0L856.0 289.0L861.0 284.0L866.0 283.0L871.0 281.0L875.0 275.0L880.0 262.5L885.0 254.0L888.8 248.8" stroke="#ecd952" stroke-width="1.150" fill="none" stroke-linejoin="round"/>
<path d="M51 162H1095M51 209H1095M51 451H1095" stroke="#fff" stroke-width="2.150"/>
</g>
<path d="M50.0 553.0L51.2 540.4L52.4 535.8L53.6 536.4L54.8 543.5L56.0 544.6L57.2 547.3L58.4 550.4L59.6 554.3L60.8 561.2L62.0 570.5L63.2 566.4L64.4 548.9L65.6 542.7L66.8 538.1L68.0 538.9L69.2 536.9L70.4 538.2L71.6 529.1L72.8 516.2L74.0 506.5L75.2 512.4L76.4 514.6L77.6 513.9L78.8 515.7L80.0 518.3L81.2 520.8L82.4 528.5L83.6 531.3L84.8 540.7L86.0 532.7L87.2 522.1L88.4 519.9L89.6 520.1L90.8 528.7L92.0 531.4L93.2 539.9L94.4 536.7L95.6 529.1L96.8 529.8L98.0 526.2L99.2 525.4L100.4 525.0L101.6 526.1L102.8 535.4L104.0 536.1L105.2 527.7L106.4 518.5L107.6 514.4L108.8 515.2L110.0 523.2L111.2 518.3L112.4 514.9L113.6 519.5L114.8 518.2L116.0 518.6L117.2 513.2L118.4 506.7L119.6 503.2L120.8 508.0L122.0 507.5L123.2 505.6L124.4 512.1L125.6 516.9L126.8 525.2L128.0 532.8L129.2 542.0L130.4 559.4L131.6 548.1L132.8 539.3L134.0 536.9L135.2 530.6L136.4 537.1L137.6 542.0L138.8 537.8L140.0 545.2L141.2 549.4L142.4 545.9L143.6 552.1L144.8 543.6L146.0 533.4L147.2 529.6L148.4 526.5L149.6 538.6L150.8 537.7L152.0 531.4L153.2 540.6L154.4 541.5L155.6 541.5L156.8 542.8L158.0 555.5L159.2 555.2L160.4 547.4L161.6 545.3L162.8 542.5L164.0 540.2L165.2 531.7L166.4 522.9L167.6 511.9L168.8 512.9L170.0 510.8L171.2 520.8L172.4 517.1L173.6 512.1L174.8 519.4L176.0 520.2L177.2 512.5L178.4 506.0L179.6 503.8L180.8 504.1L182.0 509.5L183.2 512.3L184.4 510.0L185.6 516.9L186.8 527.8L188.0 540.2L189.2 532.7L190.4 523.5L191.6 517.9L192.8 510.5L194.0 510.5L195.2 508.8L196.4 505.7L197.6 499.4L198.8 506.3L200.0 510.5L201.2 513.4L202.4 512.8L203.6 513.6L204.8 518.5L206.0 517.0L207.2 509.2L208.4 512.5L209.6 518.0L210.8 517.9L212.0 513.4L213.2 521.6L214.4 528.6L215.6 522.1L216.8 510.5L218.0 507.5L219.2 507.3L220.4 504.8L221.6 506.1L222.8 513.6L224.0 513.4L225.2 519.1L226.4 529.2L227.6 538.1L228.8 541.9L230.0 549.3L231.2 555.8L232.4 565.5L233.6 554.0L234.8 548.1L236.0 547.2L237.2 543.3L238.4 538.7L239.6 533.5L240.8 525.4L242.0 523.9L243.2 525.4L244.4 527.9L245.6 525.8L246.8 515.6L248.0 515.2L249.2 519.6L250.4 521.0L251.6 526.4L252.8 531.9L254.0 529.3L255.2 534.4L256.4 543.8L257.6 555.1L258.8 543.1L260.0 536.1L261.2 526.7L262.4 517.1L263.6 521.9L264.8 523.7L266.0 519.7L267.2 507.9L268.4 503.9L269.6 498.2L270.8 497.9L272.0 501.4L273.2 503.3L274.4 496.1L275.6 495.9L276.8 501.8L278.0 506.4L279.2 512.1L280.4 512.9L281.6 510.4L282.8 510.7L284.0 508.9L285.2 512.8L286.4 510.0L287.6 509.8L288.8 519.4L290.0 528.2L291.2 534.3L292.4 534.6L293.6 539.1L294.8 545.4L296.0 549.4L297.2 544.4L298.4 537.3L299.6 519.7L300.8 522.2L302.0 530.9L303.2 534.5L304.4 533.3L305.6 530.1L306.8 524.5L308.0 516.6L309.2 512.1L310.4 509.8L311.6 498.3L312.8 492.3L314.0 488.8L315.2 494.1L316.4 496.6L317.6 500.7L318.8 501.1L320.0 520.9L321.2 536.3L322.4 536.0L323.6 538.3L324.8 539.9L326.0 534.5L327.2 540.3L328.4 547.3L329.6 548.3L330.8 539.6L332.0 542.9L333.2 540.2L334.4 530.2L335.6 508.8L336.8 499.1L338.0 501.6L339.2 503.0L340.4 498.1L341.6 504.8L342.8 503.9L344.0 509.1L345.2 507.1L346.4 505.4L347.6 498.8L348.8 493.6L350.0 489.3L351.2 488.0L352.4 479.6L353.6 487.3L354.8 495.3L356.0 498.9L357.2 501.3L358.4 496.5L359.6 506.3L360.8 510.6L362.0 521.8L363.2 517.3L364.4 518.0L365.6 516.0L366.8 516.8L368.0 519.2L369.2 518.1L370.4 520.0L371.6 525.0L372.8 524.2L374.0 519.8L375.2 514.9L376.4 519.0L377.6 521.6L378.8 511.1L380.0 504.7L381.2 500.2L382.4 503.0L383.6 502.0L384.8 501.9L386.0 507.4L387.2 511.0L388.4 517.5L389.6 519.8L390.8 519.5L392.0 529.2L393.2 536.2L394.4 543.6L395.6 550.4L396.8 543.6L398.0 532.1L399.2 528.5L400.4 522.0L401.6 522.8L402.8 524.9L404.0 522.4L405.2 519.9L406.4 522.3L407.6 520.6L408.8 521.0L410.0 521.5L411.2 525.5L412.4 518.2L413.6 535.0L414.8 534.7L416.0 532.0L417.2 532.7L418.4 528.0L419.6 515.4L420.8 499.7L422.0 502.7L423.2 511.8L424.4 528.0L425.6 520.8L426.8 514.0L428.0 515.1L429.2 522.3L430.4 521.1L431.6 517.1L432.8 517.4L434.0 520.8L435.2 534.2L436.4 543.3L437.6 541.5L438.8 534.5L440.0 516.7L441.2 515.2L442.4 508.8L443.6 516.9L444.8 522.9L446.0 517.1L447.2 516.0L448.4 518.3L449.6 517.0L450.8 516.9L452.0 506.5L453.2 497.4L454.4 498.7L455.6 503.9L456.8 502.1L458.0 506.8L459.2 510.4L460.4 522.0L461.6 530.6L462.8 538.2L464.0 548.6L465.2 557.4L466.4 557.7L467.6 543.7L468.8 540.4L470.0 533.0L471.2 537.6L472.4 537.7L473.6 545.5L474.8 545.8L476.0 540.8L477.2 536.5L478.4 527.1L479.6 519.8L480.8 518.4L482.0 520.3L483.2 520.9L484.4 533.2L485.6 538.6L486.8 530.2L488.0 531.5L489.2 534.3L490.4 536.4L491.6 536.7L492.8 533.9L494.0 540.8L495.2 541.7L496.4 546.5L497.6 538.7L498.8 532.5L500.0 531.1L501.2 525.2L502.4 521.5L503.6 518.6L504.8 512.3L506.0 511.7L507.2 508.2L508.4 511.4L509.6 511.5L510.8 517.8L512.0 515.8L513.2 510.0L514.4 507.1L515.6 499.1L516.8 496.1L518.0 501.5L519.2 519.2L520.4 539.5L521.6 542.3L522.8 548.5L524.0 550.9L525.2 552.0L526.4 541.8L527.6 535.9L528.8 534.0L530.0 533.9L531.2 534.0L532.4 532.7L533.6 530.7L534.8 528.3L536.0 543.2L537.2 541.8L538.4 530.3L539.6 521.1L540.8 515.8L542.0 512.8L543.2 505.8L544.4 503.0L545.6 504.9L546.8 503.6L548.0 499.1L549.2 491.7L550.4 498.9L551.6 505.9L552.8 505.8L554.0 508.2L555.2 512.5L556.4 521.0L557.6 528.2L558.8 527.3L560.0 523.3L561.2 522.5L562.4 517.4L563.6 528.2L564.8 535.0L566.0 530.1L567.2 525.5L568.4 524.8L569.6 524.3L570.8 526.4L572.0 526.9L573.2 527.8L574.4 529.6L575.6 533.6L576.8 545.7L578.0 550.4L579.2 541.8L580.4 529.9L581.6 530.6L582.8 530.8L584.0 522.3L585.2 517.9L586.4 514.2L587.6 515.1L588.8 520.2L590.0 519.7L591.2 538.0L592.4 538.9L593.6 542.0L594.8 549.0L596.0 555.3L597.2 564.2L598.4 557.2L599.6 535.7L600.8 525.7L602.0 530.9L603.2 537.0L604.4 542.2L605.6 539.3L606.8 534.6L608.0 530.5L609.2 535.1L610.4 536.0L611.6 532.5L612.8 531.3L614.0 535.6L615.2 534.5L616.4 531.8L617.6 531.0L618.8 526.1L620.0 523.4L621.2 519.4L622.4 519.8L623.6 539.3L624.8 543.2L626.0 530.9L627.2 534.4L628.4 537.4L629.6 533.0L630.8 524.3L632.0 522.1L633.2 524.1L634.4 522.4L635.6 525.4L636.8 528.9L638.0 534.0L639.2 539.0L640.4 538.8L641.6 538.7L642.8 553.7L644.0 539.6L645.2 530.3L646.4 526.1L647.6 522.7L648.8 520.1L650.0 512.9L651.2 516.7L652.4 539.3L653.6 538.2L654.8 535.2L656.0 531.4L657.2 533.7L658.4 532.3L659.6 539.2L660.8 543.6L662.0 553.5L663.2 564.7L664.4 564.9L665.6 559.8L666.8 562.9L668.0 563.9L669.2 556.1L670.4 558.4L671.6 557.9L672.8 546.6L674.0 537.6L675.2 531.4L676.4 526.4L677.6 520.8L678.8 502.1L680.0 503.9L681.2 508.0L682.4 524.5L683.6 539.7L684.8 535.6L686.0 527.8L687.2 522.2L688.4 519.1L689.6 517.1L690.8 520.8L692.0 527.4L693.2 537.2L694.4 534.2L695.6 537.3L696.8 536.7L698.0 543.4L699.2 550.2L700.4 554.1L701.6 547.8L702.8 542.0L704.0 536.8L705.2 532.7L706.4 529.5L707.6 529.9L708.8 530.0L710.0 528.9L711.2 537.8L712.4 537.8L713.6 520.6L714.8 521.9L716.0 522.0L717.2 523.4L718.4 529.6L719.6 526.8L720.8 527.9L722.0 522.5L723.2 525.5L724.4 536.4L725.6 536.7L726.8 526.2L728.0 519.1L729.2 505.9L730.4 514.3L731.6 521.1L732.8 525.4L734.0 530.8L735.2 528.1L736.4 531.8L737.6 528.4L738.8 529.1L740.0 515.1L741.2 508.7L742.4 499.5L743.6 493.9L744.8 506.8L746.0 512.2L747.2 509.4L748.4 515.6L749.6 520.4L750.8 520.4L752.0 524.1L753.2 533.4L754.4 539.4L755.6 549.7L756.8 557.6L758.0 550.6L759.2 546.7L760.4 553.3L761.6 556.7L762.8 550.1L764.0 534.5L765.2 527.5L766.4 518.3L767.6 514.6L768.8 506.8L770.0 525.9L771.2 535.4L772.4 534.3L773.6 528.7L774.8 527.0L776.0 526.3L777.2 529.8L778.4 532.3L779.6 529.0L780.8 539.0L782.0 546.9L783.2 564.1L784.4 549.9L785.6 539.8L786.8 534.4L788.0 542.2L789.2 547.7L790.4 530.9L791.6 517.4L792.8 519.5L794.0 520.7L795.2 516.7L796.4 515.5L797.6 514.3L798.8 509.1L800.0 513.0L801.2 514.7L802.4 516.9L803.6 520.5L804.8 516.2L806.0 516.4L807.2 510.6L808.4 522.0L809.6 531.4L810.8 531.1L812.0 521.2L813.2 522.6L814.4 525.8L815.6 524.6L816.8 520.0L818.0 522.8L819.2 518.1L820.4 520.5L821.6 528.8L822.8 528.4L824.0 500.9L825.2 507.1L826.4 502.4L827.6 493.7L828.8 488.5L830.0 493.0L831.2 494.7L832.4 499.0L833.6 505.7L834.8 504.3L836.0 502.6L837.2 502.7L838.4 508.5L839.6 512.6L840.8 514.0L842.0 518.5L843.2 517.6L844.4 514.9L845.6 512.8L846.8 521.6L848.0 520.5L849.2 520.8L850.4 522.2L851.6 528.8L852.8 527.4L854.0 522.3L855.2 513.6L856.4 510.7L857.6 511.5L858.8 513.3L860.0 517.7L861.2 525.0L862.4 529.1L863.6 537.6L864.8 545.8L866.0 540.5L867.2 536.4L868.4 540.6L869.6 531.4L870.8 516.0L872.0 514.6L873.2 508.0L874.4 499.6L875.6 490.1L876.8 490.6L878.0 495.7L879.2 498.4L880.4 503.6L881.6 501.3L882.8 505.6L884.0 509.6L885.2 509.0L886.4 512.8L887.6 529.5L888.8 525.7L889.2 528.8" stroke="#55c24f" stroke-width="1.150" fill="none" stroke-linejoin="round"/>
</svg>

<!-- pane / axis separators -->
<div class="hsep" style="left:51px;top:604px;width:1105px;background:#2a2a2a"></div>
<!-- legend -->
<div class="abs" style="left:75px;top:152px;width:196px;height:19px;background:rgba(15,15,15,.62)"></div>
<div class="abs" style="left:51px;top:195px;width:79px;height:16px;background:rgba(15,15,15,.45)"></div>
<div class="abs" style="left:310px;top:160px;width:42px;height:4px;background:rgba(15,15,15,.55)"></div>
<div class="abs" style="left:64.700px;top:152.300px;width:10px;height:10px;border-radius:50%;background:#1aa3a3"></div>
<div class="t" style="left:68px;top:153.500px;font-size:6.500px;color:#fff;font-weight:bold">₮</div>
<div class="abs" style="left:57.500px;top:157.500px;width:12px;height:12px;border-radius:50%;background:#f7931a;border:1px solid #0f0f0f"></div>
<div class="t" style="left:61px;top:160px;font-size:7px;color:#fff;font-weight:bold">₿</div>
<div class="t" style="transform-origin:0 50%;transform:scaleX(0.9153);left:78px;top:154.3px;font-size:14px;color:#dbdbdb">BTCUSDT SPOT · 4시간 · BYBIT</div>
<svg style="left:286.200px;top:156px" width="10.800" height="10.500" viewBox="0 0 12 11" preserveAspectRatio="none"><path d="M0 0h12l-3 5.500 3 5.500H0z" fill="#f5514f"/></svg>
<div class="abs" style="left:320px;top:150.500px;width:22px;height:22px;border-radius:50%;background:radial-gradient(circle,rgba(14,80,70,.6) 0,rgba(13,62,55,.5) 50%,rgba(13,50,45,.25) 75%,rgba(15,15,15,0) 100%)"></div>
<div class="abs" style="left:326.500px;top:157px;width:9px;height:9px;border-radius:50%;background:#12a88f"></div>
<div class="t" style="transform-origin:0 50%;transform:scaleX(0.9270);left:58.3px;top:177.8px;font-size:11.8px;color:#f23645">102,137.5&nbsp; −679.4 (−0.66%)</div>
<div class="t" style="transform-origin:0 50%;transform:scaleX(0.9424);left:58.3px;top:196.9px;font-size:11.8px;color:#dbdbdb">SMA <span style="color:#8c8c8c">60 close</span></div>
<div class="abs" style="left:56px;top:218px;width:27px;height:23px;border:1px solid #3a3a3a;border-radius:3px;background:#0f0f0f"></div>
<svg style="left:64px;top:226px" width="11" height="7" viewBox="0 0 11 7"><path d="M1 6l4.500-4.500L10 6" class="ic" stroke-width="1.600"/></svg>
<div class="t" style="transform-origin:0 50%;transform:scaleX(0.9297);left:58.3px;top:489.9px;font-size:11.8px;color:#dbdbdb">RSI <span style="color:#8c8c8c">14 close</span></div>
<!-- TV logo -->
<svg style="left:61px;top:553px" width="27" height="14" viewBox="0 0 54 28"><path d="M0 0h21v28H10.500V10.500H0zM34 0h20L42 28H22z" fill="#fff"/><circle cx="28" cy="5.500" r="5.500" fill="#fff"/></svg>
<!-- lightning -->
<svg style="left:879px;top:457px" width="20" height="20" viewBox="0 0 20 20"><circle cx="10" cy="10" r="8.700" fill="none" stroke="#c24fd6" stroke-width="1.400"/><path d="M11 4.500L6.500 11h3L9 15.500l4.500-6.500h-3z" fill="#c24fd6"/></svg>
<!-- price axis -->
<div class="abs" style="left:1095px;top:147px;width:61px;height:433px;background:#0f0f0f"></div>
<div class="abs" style="left:1094px;top:146px;width:58px;height:9px;background:#fff;overflow:hidden"><div class="t" style="transform-origin:0 50%;transform:scaleX(0.9324);left:8.7px;top:-4.6px;font-size:10.8px;color:#111">109,941.5</div></div>
<div class="abs" style="left:1094px;top:155px;width:58px;height:16.500px;background:#089981"></div>
<div class="t" style="transform-origin:0 50%;transform:scaleX(0.9324);left:1102.7px;top:156.8px;font-size:10.8px;color:#fff">109,754.5</div>
<div class="abs" style="left:1094px;top:172.500px;width:58px;height:15px;background:#808080"></div>
<div class="t" style="transform-origin:0 50%;transform:scaleX(0.9324);left:1102.7px;top:173.8px;font-size:10.8px;color:#fff">104,550.0</div>
<div class="abs" style="left:1094px;top:187.500px;width:58px;height:16px;background:#fff"></div>
<div class="t" style="transform-origin:0 50%;transform:scaleX(0.9324);left:1102.7px;top:188.6px;font-size:10.8px;color:#111">104,208.3</div>
<div class="abs" style="left:1094px;top:203.500px;width:58px;height:42.500px;background:#f23645;border-radius:0 0 2px 2px"></div>
<div class="t" style="transform-origin:0 50%;transform:scaleX(0.9324);left:1102.7px;top:204.2px;font-size:10.8px;color:#fff">102,226.8</div>
<div class="t" style="transform-origin:0 50%;transform:scaleX(0.9324);left:1102.7px;top:218.8px;font-size:10.8px;color:#fff">102,137.5</div>
<div class="t" style="transform-origin:0 50%;transform:scaleX(0.9279);left:1102.7px;top:231.6px;font-size:10.8px;color:#ffc9ce">02:18:06</div>
<div class="abs" style="left:1094px;top:246px;width:52.500px;height:16px;background:#ffeb3b"></div>
<div class="t" style="transform-origin:0 50%;transform:scaleX(0.9279);left:1102.7px;top:247.3px;font-size:10.8px;color:#111">99,297.9</div>
<div class="t" style="transform-origin:0 50%;transform:scaleX(0.9279);left:1102.7px;top:269.8px;font-size:10.8px;color:#c4c4c4">96,000.0</div>
<div class="t" style="transform-origin:0 50%;transform:scaleX(0.9279);left:1102.7px;top:302.2px;font-size:10.8px;color:#c4c4c4">92,000.0</div>
<div class="t" style="transform-origin:0 50%;transform:scaleX(0.9279);left:1102.7px;top:334.8px;font-size:10.8px;color:#c4c4c4">88,000.0</div>
<div class="t" style="transform-origin:0 50%;transform:scaleX(0.9279);left:1102.7px;top:367.2px;font-size:10.8px;color:#c4c4c4">84,000.0</div>
<div class="t" style="transform-origin:0 50%;transform:scaleX(0.9279);left:1102.7px;top:399.8px;font-size:10.8px;color:#c4c4c4">80,000.0</div>
<div class="t" style="transform-origin:0 50%;transform:scaleX(0.9279);left:1102.7px;top:432.6px;font-size:10.8px;color:#c4c4c4">76,000.0</div>
<div class="abs" style="left:1094px;top:443.500px;width:53px;height:9.500px;background:#fff;overflow:hidden"><div class="t" style="transform-origin:0 50%;transform:scaleX(0.9398);left:8.5px;top:1.1px;font-size:10.8px;color:#111">74,594.9</div></div>
<div class="box" style="left:1105.500px;top:457px"></div><div class="t" style="transform-origin:0 50%;transform:scaleX(0.9776);left:1110px;top:460.55px;font-size:11.5px;color:#e0e0e0">A</div>
<div class="box" style="left:1127.500px;top:457px"></div><div class="t" style="transform-origin:0 50%;transform:scaleX(0.9054);left:1133.2px;top:460.55px;font-size:11.5px;color:#e0e0e0">L</div>
<div class="t" style="transform-origin:0 50%;transform:scaleX(0.9434);left:1102.5px;top:490.9px;font-size:10.8px;color:#c4c4c4">75.00</div>
<div class="abs" style="left:1094px;top:508px;width:38px;height:16.500px;background:#fdd835"></div>
<div class="t" style="transform-origin:0 50%;transform:scaleX(0.9434);left:1102.5px;top:510.6px;font-size:10.8px;color:#111">60.53</div>
<div class="abs" style="left:1094px;top:524.500px;width:38px;height:15px;background:#4caf50"></div>
<div class="t" style="transform-origin:0 50%;transform:scaleX(0.9434);left:1102.5px;top:526.8px;font-size:10.8px;color:#fff">48.05</div>
<div class="box" style="left:1105.500px;top:556.500px"></div><div class="t" style="transform-origin:0 50%;transform:scaleX(0.9776);left:1110px;top:560.05px;font-size:11.5px;color:#e0e0e0">A</div>
<div class="box" style="left:1127.500px;top:556.500px"></div><div class="t" style="transform-origin:0 50%;transform:scaleX(0.9054);left:1133.2px;top:560.05px;font-size:11.5px;color:#e0e0e0">L</div>
<div class="hsep" style="left:51px;top:480px;width:1105px;background:#2a2a2a"></div>
<!-- time axis -->
<div class="t" style="transform-origin:0 50%;transform:scaleX(0.8800);left:133.7px;top:587.5px;font-size:11px;color:#c4c4c4">9월</div>
<div class="t" style="transform-origin:0 50%;transform:scaleX(0.8363);left:220px;top:587.5px;font-size:11px;color:#c4c4c4">10월</div>
<div class="t" style="transform-origin:0 50%;transform:scaleX(0.8957);left:310.7px;top:587.5px;font-size:11px;color:#c4c4c4">11월</div>
<div class="t" style="transform-origin:0 50%;transform:scaleX(0.8945);left:398.7px;top:587.5px;font-size:11px;color:#c4c4c4">12월</div>
<div class="t" style="transform-origin:0 50%;transform:scaleX(0.9230);left:488.7px;top:587.5px;font-size:11px;color:#e6e6e6;font-weight:bold">2025</div>
<div class="t" style="transform-origin:0 50%;transform:scaleX(0.8800);left:583.7px;top:587.5px;font-size:11px;color:#c4c4c4">2월</div>
<div class="t" style="transform-origin:0 50%;transform:scaleX(0.9231);left:665.7px;top:587.5px;font-size:11px;color:#c4c4c4">3월</div>
<div class="t" style="transform-origin:0 50%;transform:scaleX(0.9231);left:756.7px;top:587.5px;font-size:11px;color:#c4c4c4">4월</div>
<div class="t" style="transform-origin:0 50%;transform:scaleX(0.8923);left:845px;top:587.5px;font-size:11px;color:#c4c4c4">5월</div>
<div class="t" style="transform-origin:0 50%;transform:scaleX(0.9231);left:935.7px;top:587.5px;font-size:11px;color:#c4c4c4">6월</div>
<div class="t" style="transform-origin:0 50%;transform:scaleX(0.8923);left:1024.2px;top:587.5px;font-size:11px;color:#c4c4c4">7월</div>
<svg style="left:1118.500px;top:586px" width="14" height="13" viewBox="0 0 14 13"><path d="M4 1h6l3 5.500-3 5.500H4L1 6.500z" class="ic" stroke-width="1.200"/><circle cx="7" cy="6.500" r="1.900" class="ic" stroke-width="1.200"/></svg>
<!-- range bar -->
<div class="t" style="transform-origin:0 50%;transform:scaleX(0.8421);left:63px;top:616.7px;font-size:13px;color:#dbdbdb">1D</div>
<div class="t" style="transform-origin:0 50%;transform:scaleX(0.8722);left:88.7px;top:616.7px;font-size:13px;color:#dbdbdb">5D</div>
<div class="t" style="transform-origin:0 50%;transform:scaleX(0.8858);left:114.5px;top:616.7px;font-size:13px;color:#dbdbdb">1M</div>
<div class="t" style="transform-origin:0 50%;transform:scaleX(0.9024);left:141.2px;top:616.7px;font-size:13px;color:#dbdbdb">3M</div>
<div class="t" style="transform-origin:0 50%;transform:scaleX(0.9024);left:168.7px;top:616.7px;font-size:13px;color:#dbdbdb">6M</div>
<div class="t" style="transform-origin:0 50%;transform:scaleX(0.8192);left:195.7px;top:616.7px;font-size:13px;color:#dbdbdb">YTD</div>
<div class="t" style="transform-origin:0 50%;transform:scaleX(0.8173);left:228.2px;top:616.7px;font-size:13px;color:#dbdbdb">1Y</div>
<div class="t" style="transform-origin:0 50%;transform:scaleX(0.9364);left:252.5px;top:616.65px;font-size:12.3px;color:#dbdbdb;font-weight:500">전체</div>
<div class="sep" style="left:283.500px;top:612px;height:20px"></div>
<svg style="left:296px;top:613px" width="18" height="18" viewBox="0 0 18 18"><path d="M3 8V5a2 2 0 0 1 2-2h10a2 2 0 0 1 2 2v10a2 2 0 0 1-2 2h-4M3 6.500h14M7 1v3.500M13 1v3.500M1 13h7M5.500 10.500L8 13l-2.500 2.500" class="ic" stroke-width="1.300"/></svg>
<div class="t" style="transform-origin:0 50%;transform:scaleX(0.8876);left:1062.5px;top:616.3px;font-size:13px;color:#dbdbdb">10:41:53 UTC+9</div>
<!-- bottom panel -->
<div id="bpanel" class="abs"></div>
<div class="t" style="transform-origin:0 50%;transform:scaleX(0.9844);left:64.7px;top:653.65px;font-size:12.3px;color:#dbdbdb;font-weight:500">암호화폐 페어 스크리너</div>
<div class="t" style="transform-origin:0 50%;transform:scaleX(0.9844);left:206.8px;top:653.65px;font-size:12.3px;color:#dbdbdb;font-weight:500">Pine 에디터</div>
<div class="t" style="transform-origin:0 50%;transform:scaleX(0.9933);left:296.6px;top:653.65px;font-size:12.3px;color:#dbdbdb;font-weight:500">전략테스터</div>
<div class="t" style="transform-origin:0 50%;transform:scaleX(0.9778);left:382px;top:653.65px;font-size:12.3px;color:#dbdbdb;font-weight:500">리플레이 트레이딩 패널</div>
<div class="t" style="transform-origin:0 50%;transform:scaleX(0.9780);left:529.3px;top:653.65px;font-size:12.3px;color:#dbdbdb;font-weight:500">트레이딩패널</div>
<svg style="left:1099px;top:655px" width="16" height="9" viewBox="0 0 16 9"><path d="M1 8l7-6.500L15 8" class="ic" stroke-width="1.400"/></svg>
<svg style="left:1130.500px;top:653px" width="17" height="14.500" viewBox="0 0 18 15"><path d="M1 5V3a2 2 0 0 1 2-2h12a2 2 0 0 1 2 2v2M17 10v2a2 2 0 0 1-2 2H3a2 2 0 0 1-2-2v-2" class="ic" stroke-width="1.400"/></svg>
<!-- ===== floating favourites drawing toolbar ===== -->
<div id="float" class="abs"></div>
<svg style="left:585px;top:109px" width="398" height="36" viewBox="585 109 398 36">
<g fill="#4a4a4a"><circle cx="593.500" cy="121" r="1"/><circle cx="598" cy="121" r="1"/><circle cx="593.500" cy="125.500" r="1"/><circle cx="598" cy="125.500" r="1"/><circle cx="593.500" cy="130" r="1"/><circle cx="598" cy="130" r="1"/></g>
<g class="ic" stroke-width="1.150">
<!-- trend line -->
<path d="M617.500 131.500l12.500-12.500"/><circle cx="616" cy="133" r="2"/><circle cx="631.500" cy="117.500" r="2"/>
<!-- horizontal line -->
<path d="M649 126h7.500M660.500 126h7.500"/><circle cx="658.500" cy="126" r="2"/>
<!-- rectangle -->
<path d="M686.500 118h11.500M686.500 133h11.500M684.500 120v11M700 120v11"/><circle cx="684.500" cy="118" r="2"/><circle cx="700" cy="118" r="2"/><circle cx="684.500" cy="133" r="2"/><circle cx="700" cy="133" r="2"/>
<!-- fib -->
<path d="M717 117h20M717 122h17M717 127.500h20M719 133h18"/><circle cx="736" cy="122" r="2"/><circle cx="717" cy="133" r="2"/>
<!-- head & shoulders -->
<path d="M749 129.500h24M751.500 132l2.500-8M755 124l3 4.500M758.500 128.500l2.500-10M762.500 118.500l2.500 10M765.500 128.500l3-4.500M769 124l2.500 8"/><circle cx="751" cy="134" r="1.800"/><circle cx="754.500" cy="122" r="1.800"/><circle cx="758" cy="130" r="1.800"/><circle cx="761.700" cy="116.500" r="1.800"/><circle cx="765.500" cy="130" r="1.800"/><circle cx="769" cy="122" r="1.800"/><circle cx="772.500" cy="134" r="1.800"/>
<!-- elliott 1-5 -->
<path d="M786.500 129l4-4M793.500 125l3.500 4M800 129l3.500-4"/><circle cx="785" cy="130.500" r="2"/><circle cx="792" cy="123.500" r="2"/><circle cx="798.500" cy="130.500" r="2"/><circle cx="805" cy="123.500" r="2"/>
<!-- elliott A-C -->
<path d="M821 129l4-4M828 125l3.500 4M834.500 129l3.500-4"/><circle cx="819.500" cy="130.500" r="2"/><circle cx="826.500" cy="123.500" r="2"/><circle cx="833" cy="130.500" r="2"/><circle cx="839.500" cy="123.500" r="2"/>
<!-- forecast 1 -->
<path d="M857 118.500h15M857 127.500h12M857 133h15"/><path d="M859 125l10-4.500" stroke-dasharray="1 2.200"/><circle cx="855" cy="118.500" r="2"/><circle cx="855" cy="127.500" r="2"/><circle cx="871" cy="127.500" r="2"/><circle cx="855" cy="133" r="2"/>
<!-- forecast 2 -->
<path d="M891 118.500h15M891 124h12M891 133h15"/><path d="M893 126.500l12 4.500" stroke-dasharray="1 2.200"/><circle cx="889" cy="118.500" r="2"/><circle cx="889" cy="124" r="2"/><circle cx="905" cy="124" r="2"/><circle cx="889" cy="133" r="2"/>
<!-- brush -->
<path d="M921.500 133.200L928.500 125C930 123.500 933.500 123.500 935 126C936.500 129 933 133.200 929 133.200ZM936.300 119.300C934.500 120.500 934.800 123 937.300 123.500L943.600 118.600"/>
<!-- text -->
<path d="M960 121v-3h13.500v3M966.700 118v15.500M964 133.500h5.500" stroke-width="1.100"/>
</g>
<g font-family="Liberation Sans, sans-serif" font-size="7.800" font-weight="bold" fill="#dbdbdb" text-anchor="middle"><text x="791.500" y="120">1</text><text x="805.500" y="120">5</text><text x="826.300" y="120">A</text><text x="839.300" y="120">C</text></g>
</svg>
<!-- ===== Android task bar ===== -->
<div id="nav" class="abs"></div>
<svg style="left:73px;top:690.600px" width="16" height="16" viewBox="0 0 16 16" fill="#fff"><circle cx="2.0" cy="2.0" r="1.450"/><circle cx="7.9" cy="2.0" r="1.450"/><circle cx="13.8" cy="2.0" r="1.450"/><circle cx="2.0" cy="7.9" r="1.450"/><circle cx="7.9" cy="7.9" r="1.450"/><circle cx="13.8" cy="7.9" r="1.450"/><circle cx="2.0" cy="13.8" r="1.450"/><circle cx="7.9" cy="13.8" r="1.450"/><circle cx="13.8" cy="13.8" r="1.450"/></svg>
<div class="abs app" style="left:442.500px;background:#e9a21f"></div>
<svg style="left:448px;top:690px" width="18" height="15" viewBox="0 0 18 15"><path d="M0 2a2 2 0 0 1 2-2h4.500l2 2H16a2 2 0 0 1 2 2v9a2 2 0 0 1-2 2H2a2 2 0 0 1-2-2z" fill="#fbe6b8"/></svg>
<div class="abs app" style="left:490px;background:#169c5a"></div>
<svg style="left:498px;top:688px" width="13" height="20" viewBox="0 0 13 20"><path d="M10.500 3.500h-3a4 4 0 0 0-4 4v5a4 4 0 0 0 4 4h3" fill="none" stroke="#d8f5e3" stroke-width="3" stroke-linecap="round"/></svg>
<div class="abs app" style="left:537.500px;background:#ea5a4c"></div>
<svg style="left:543px;top:688px" width="18" height="20" viewBox="0 0 18 20"><circle cx="9" cy="5" r="4" fill="#fde3df"/><path d="M1 17c0-4.500 3.500-6.500 8-6.500s8 2 8 6.500c-2 1.800-5 2.500-8 2.500s-6-.7-8-2.500z" fill="#fde3df"/></svg>
<div class="abs app" style="left:584.500px;background:#2977e6"></div>
<svg style="left:589px;top:688px" width="21" height="20" viewBox="0 0 21 20"><path d="M10.500 1C5 1 1 4.500 1 9c0 2.500 1.200 4.700 3.200 6.200L3.500 19l4-2.300c1 .2 2 .3 3 .3 5.500 0 9.500-3.500 9.500-8s-4-8-9.500-8z" fill="#e8f1ff"/><circle cx="6" cy="9" r="1.500" fill="#2977e6"/><circle cx="10.500" cy="9" r="1.500" fill="#2977e6"/><circle cx="15" cy="9" r="1.500" fill="#2977e6"/></svg>
<div class="abs app" style="left:632px;background:#5a4fd4"></div>
<svg style="left:636px;top:687px" width="22" height="22" viewBox="0 0 22 22"><circle cx="11" cy="11" r="7.500" fill="#e6e3ff"/><path d="M2 17.500C6 16 14 10 19.500 3.500" fill="none" stroke="#5bb8ff" stroke-width="2" stroke-linecap="round"/></svg>
<div class="abs app" style="left:679.500px;background:#17889c"></div>
<svg style="left:685px;top:688px" width="18" height="19" viewBox="0 0 18 19"><rect x="0" y="2" width="18" height="17" rx="3" fill="#e8f7fa"/><rect x="3.500" y="0" width="2.500" height="4.500" rx="1.200" fill="#e8f7fa"/><rect x="12" y="0" width="2.500" height="4.500" rx="1.200" fill="#e8f7fa"/></svg>
<div class="t" style="left:688px;top:694px;font-size:10.500px;font-weight:bold;color:#113c47;letter-spacing:-.3px">13</div>
<div class="abs" style="left:721px;top:689px;width:1.500px;height:18px;background:#8a8f92"></div>
<div class="abs app" style="left:735.500px;background:#ececec"></div>
<svg style="left:743px;top:689px" width="16" height="18" viewBox="0 0 16 18"><path d="M1 1v16l8-8z" fill="#2fa8e0"/><path d="M1 1l8 8 3-3z" fill="#3bc46a"/><path d="M1 17l8-8 3 3z" fill="#ea4d4a"/><path d="M12 6l3.500 2.100a1 1 0 0 1 0 1.800L12 12 9 9z" fill="#f7b928"/></svg>
<div class="abs" style="left:755px;top:681px;width:14px;height:14px;border-radius:50%;background:#f4792b"></div>
<div class="t" style="left:759.500px;top:683.500px;font-size:9px;color:#fff;font-weight:bold">1</div>
<svg style="left:936.500px;top:691px" width="14.500" height="14" viewBox="0 0 14.500 14"><path d="M1 0v14M7.200 0v14M13.500 0v14" stroke="#eee" stroke-width="1.450"/></svg>
<svg style="left:1022.500px;top:690.500px" width="15" height="15" viewBox="0 0 15 15"><rect x="1" y="1" width="13" height="13" rx="4.200" fill="none" stroke="#eee" stroke-width="1.600"/></svg>
<svg style="left:1112px;top:690.500px" width="9.500" height="15" viewBox="0 0 9.500 15"><path d="M8.500 1L1.500 7.500l7 6.500" fill="none" stroke="#eee" stroke-width="1.600"/></svg>
</div>
</body>
</html>
